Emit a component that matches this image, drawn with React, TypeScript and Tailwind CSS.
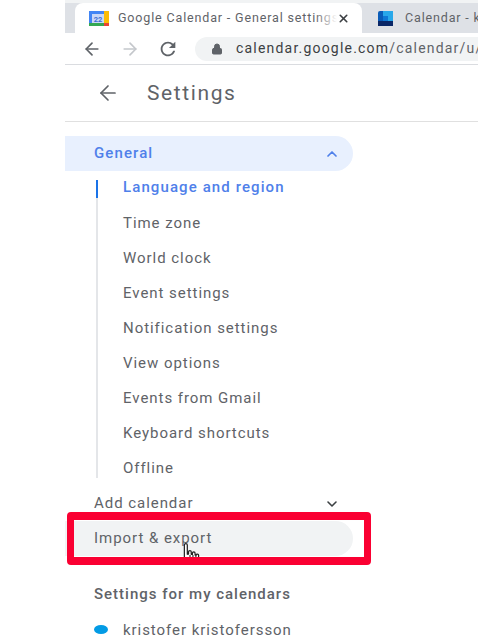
import React from "react";
import { ArrowLeft, ArrowRight, Lock, X, ChevronUp, ChevronDown } from "lucide-react";

const items = ["Time zone", "World clock", "Event settings", "Notification settings", "View options", "Events from Gmail", "Keyboard shortcuts", "Offline"];

function Cursor() {
  return (
    <svg className="absolute left-[112px] top-[21px]" width="27" height="16" viewBox="0 0 22 13.04">
      <path d="M6 2.5c0-1.6 2.4-1.6 2.4 0V10l1-.2V8c0-1.3 2.2-1.3 2.2 0v2l1 .1V9c0-1.2 2.1-1.2 2.1 0v1.5l.9.2c0-1.2 2-1 2 .2v5.6c0 1.8-.7 3-1.3 4.3v2.2H8.5v-2L2.6 15c-1-1.3.7-2.8 1.9-1.7L6 15V2.5z" fill="#fff" stroke="#222" strokeWidth="1" strokeLinejoin="round" />
      <path d="M10.6 10.5v5M13 10.5v5M15.4 10.5v5" stroke="#222" strokeWidth="0.9" />
    </svg>
  );
}

export default function App() {
  return (
    <div className="h-[644px] w-[478px] overflow-hidden bg-white pl-[65px] font-['Roboto',sans-serif]">
      <div className="h-[3px] bg-[#f1f3f4]" />
      <div className="flex h-[30px] items-stretch overflow-hidden bg-[#dee1e6] pl-[10px]">
        <div className="relative flex w-[287px] shrink-0 items-center rounded-t-[8px] bg-white pl-[14px] pr-[13px]">
          <svg width="20" height="15" viewBox="0 0 20 15" className="shrink-0">
            <rect width="20" height="15" fill="#fff" />
            <rect width="15" height="3" fill="#4285f4" />
            <rect width="3" height="12" fill="#4285f4" />
            <rect x="15" width="5" height="12" fill="#fbbc04" />
            <rect y="12" width="15" height="3" fill="#34a853" />
            <rect x="15" y="12" width="5" height="3" fill="#ea4335" />
            <rect x="3" y="3" width="12" height="9" fill="#c9d8f7" />
            <text x="9" y="10.5" fontSize="7.5" fontWeight="700" textAnchor="middle" fill="#3b6fd4" fontFamily="Roboto">22</text>
          </svg>
          <span className="relative ml-[9px] w-[219px] shrink-0 overflow-hidden whitespace-nowrap text-[12.5px] tracking-[0.85px] text-[#5f6368]">
            Google Calendar - General settings
            <span className="absolute right-0 top-0 h-full w-[22px] bg-gradient-to-r from-transparent to-white" />
          </span>
          <X className="shrink-0 text-[#3c4043]" size={13} strokeWidth={3} />
        </div>
        <div className="flex items-center pl-[16px]">
          <svg width="15" height="15" viewBox="0 0 15 15" className="shrink-0">
            <rect width="15" height="15" rx="2" fill="#0a5cb8" />
            <rect x="5" width="10" height="5" fill="#28a8ea" />
            <rect x="5" y="5" width="5" height="5" fill="#0f78d4" />
            <rect x="10" y="5" width="5" height="5" fill="#28a8ea" />
            <rect y="10" width="15" height="5" fill="#0a2767" />
          </svg>
          <span className="ml-[12px] whitespace-nowrap text-[12.5px] tracking-[0.85px] text-[#5f6368]">Calendar - k</span>
        </div>
      </div>
      <div className="flex h-[32px] items-center border-b-[1px] border-[#dadce0] pl-[17px] text-[#5f6368]">
        <ArrowLeft size={20} strokeWidth={2} className="shrink-0" />
        <ArrowRight size={20} strokeWidth={2} className="ml-[18px] shrink-0 text-[#c4c7cb]" />
        <svg width="22" height="22" viewBox="0 0 24 24" fill="currentColor" className="ml-[17px] shrink-0">
          <path d="M17.65 6.35A7.958 7.958 0 0 0 12 4c-4.42 0-7.99 3.58-7.99 8s3.57 8 7.99 8c3.73 0 6.84-2.55 7.73-6h-2.08A5.99 5.99 0 0 1 12 18c-3.31 0-6-2.69-6-6s2.69-6 6-6c1.66 0 3.14.69 4.22 1.78L13 11h7V4l-2.35 2.35z" />
        </svg>
        <div className="ml-[16px] flex h-[24px] min-w-0 flex-1 items-center overflow-hidden rounded-l-full bg-[#f1f3f4] pl-[16px]">
          <Lock size={12} fill="#5f6368" strokeWidth={2} className="shrink-0" />
          <span className="ml-[13px] whitespace-nowrap text-[14px] tracking-[1.2px] text-[#5f6368]"><span className="text-[#3c4043]">calendar.google.com</span>/calendar/u/</span>
        </div>
      </div>
      <div className="flex h-[57px] items-center border-b-[1px] border-[#e0e0e0] pl-[31px]">
        <ArrowLeft size={24} strokeWidth={1.7} className="shrink-0 text-[#5f6368]" />
        <span className="ml-[27px] mt-[2px] text-[21px] tracking-[1.6px] text-[#5f6368]">Settings</span>
      </div>

      <div className="mt-[14px]">
        <div className="flex h-[35px] w-[288px] items-center justify-between rounded-r-full bg-[#e8f0fe] pl-[29px] pr-[13px]">
          <span className="text-[15px] font-medium tracking-[1.1px] text-[#4f80ea]">General</span>
          <ChevronUp size={16} strokeWidth={2.6} className="text-[#4f80ea]" />
        </div>
        <div className="mt-[7px] ml-[31px] flex h-[308px]">
          <div className="mt-[2px] flex h-[298px] w-[2px] shrink-0 flex-col bg-[#e4e6e9]">
            <div className="h-[18px] bg-[#1a73e8]" />
          </div>
          <div className="flex flex-col pl-[25px]">
            <div className="flex h-[18px] shrink-0 items-center text-[15px] font-medium tracking-[1.1px] text-[#4f80ea]">Language and region</div>
            <div className="flex flex-col pt-[10px]">
              {items.map((t) => (
                <div key={t} className="flex h-[35px] items-center text-[15px] tracking-[0.95px] text-[#5f6368]">{t}</div>
              ))}
            </div>
          </div>
        </div>
        <div className="flex h-[35px] w-[288px] items-center justify-between pl-[29px] pr-[13px] text-[15px] tracking-[0.95px] text-[#5f6368]">
          <span>Add calendar</span>
          <ChevronDown size={16} strokeWidth={2.4} className="text-[#3c4043]" />
        </div>
        <div className="relative flex h-[35px] w-[288px] items-center rounded-r-full bg-[#f1f3f4] pl-[29px] text-[15px] tracking-[0.95px] text-[#5f6368]">
          Import &amp; export
          <Cursor />
          <div className="absolute left-[2px] top-[-9px] h-[53px] w-[304px] rounded-[4px] border-x-[7px] border-y-[8px] border-[#fa0032]" />
        </div>
        <div className="ml-[29px] mt-[27px] text-[15px] font-medium tracking-[1px] text-[#5f6368]">Settings for my calendars</div>
        <div className="ml-[29px] mt-[13px] flex items-center">
          <div className="h-[9px] w-[14px] shrink-0 rounded-[50%] bg-[#039be5]" />
          <span className="ml-[15px] text-[15px] tracking-[0.95px] text-[#5f6368]">kristofer kristofersson</span>
        </div>
      </div>
    </div>
  );
}
